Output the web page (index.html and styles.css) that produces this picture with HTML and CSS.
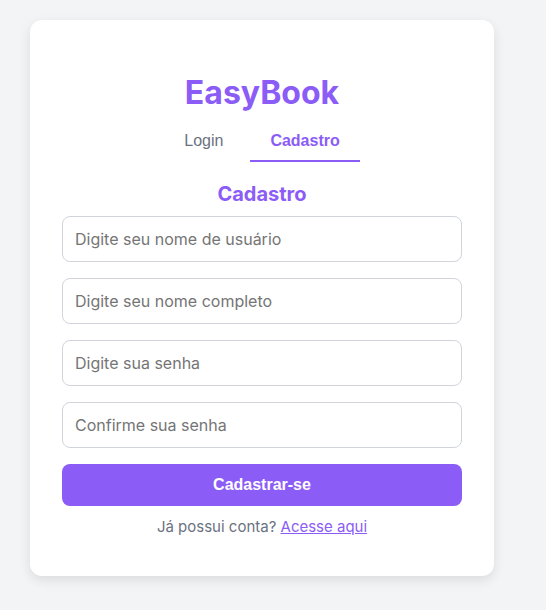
FILE: index.html
```html
<!DOCTYPE html>
<html lang="pt-BR">
<head>
<meta charset="utf-8">
<title>EasyBook</title>
<link rel="stylesheet" href="styles.css">
</head>
<body>
<div class="page">
  <div class="card">
    <h1 class="brand">EasyBook</h1>
    <div class="tabs">
      <button class="tab">Login</button>
      <button class="tab active">Cadastro</button>
    </div>
    <h2 class="form-title">Cadastro</h2>
    <form class="form">
      <input class="field" type="text" placeholder="Digite seu nome de usuário">
      <input class="field" type="text" placeholder="Digite seu nome completo">
      <input class="field" type="password" placeholder="Digite sua senha">
      <input class="field" type="password" placeholder="Confirme sua senha">
      <button class="submit" type="button">Cadastrar-se</button>
    </form>
    <p class="switch">Já possui conta? <a href="#" class="switch-link">Acesse aqui</a></p>
  </div>
</div>
</body>
</html>
```

FILE: styles.css
```css
html, body {
  margin: 0;
  padding: 0;
  background: #f3f4f6;
  font-family: Inter, "Noto Sans", sans-serif;
}

.page {
  padding: 20px 30px;
}

.card {
  width: 400px;
  padding: 32px 32px 40px;
  background: #ffffff;
  border-radius: 12px;
  box-shadow: 0 4px 12px rgba(0, 0, 0, 0.1);
}

.brand {
  margin: 21px 0 10px;
  font-size: 32px;
  font-weight: 700;
  color: #8b5cf6;
  text-align: center;
  line-height: normal;
}

.tabs {
  display: flex;
  justify-content: center;
  gap: 7px;
}

.tab {
  padding: 10px 20px;
  background: none;
  border: none;
  border-bottom: 2px solid transparent;
  font-family: "Liberation Sans", Arial, sans-serif;
  font-size: 16px;
  color: #6b7280;
  cursor: pointer;
}

.tab.active {
  font-weight: 700;
  color: #8b5cf6;
  border-bottom-color: #8b5cf6;
}

.form-title {
  margin: 20px 0 10px;
  font-size: 20px;
  font-weight: 700;
  color: #8b5cf6;
  text-align: center;
  line-height: normal;
}

.form {
  display: flex;
  flex-direction: column;
  gap: 16px;
}

.field {
  box-sizing: border-box;
  width: 100%;
  height: 46px;
  padding: 0 12px;
  border: 1px solid #d1d5db;
  border-radius: 8px;
  font-family: Inter, "Noto Sans", sans-serif;
  font-size: 16px;
  color: #111827;
  background: #fff;
}

.field::placeholder {
  color: #757575;
}

.submit {
  height: 42px;
  border: none;
  border-radius: 8px;
  background: #8b5cf6;
  color: #ffffff;
  font-family: "Liberation Sans", Arial, sans-serif;
  font-size: 16px;
  font-weight: 700;
  cursor: pointer;
}

.switch {
  margin: 11px 0 0;
  text-align: center;
  font-size: 15px;
  color: #6b7280;
}

.switch-link {
  color: #8b5cf6;
  text-decoration: underline;
}
```
